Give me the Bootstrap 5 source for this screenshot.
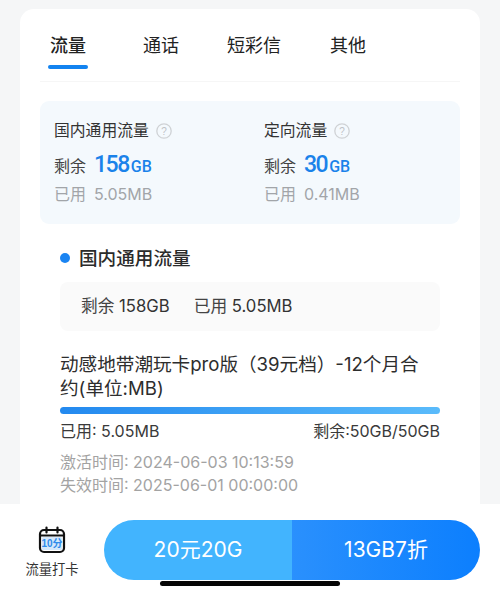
<!DOCTYPE html>
<html lang="zh">
<head>
<meta charset="utf-8">
<title>流量</title>
<link href="https://cdn.jsdelivr.net/npm/bootstrap@5.3.0/dist/css/bootstrap.min.css" rel="stylesheet">
<style>
html,body{height:596px;overflow:hidden}
body{background:#f5f6f7;font-family:"Inter","Noto Sans CJK SC",sans-serif;color:#333;position:relative}
.sheet{height:504px;padding:9px 20px 0}
.panel-main{height:495px;background:#fff;border-radius:14px 14px 0 0;padding:0 20px;overflow:hidden}
.tabs-row{height:73px;border-bottom:1px solid #f6f6f6;padding-top:23px;font-size:18px;line-height:28px;color:#222}
.tab-item{position:absolute;white-space:nowrap}
.tabs-inner{position:relative;height:100%}
.t1{left:10px;font-weight:500}.t2{left:103px}.t3{left:187px}.t4{left:290px}
.tab-bar{position:absolute;left:8px;top:33px;width:40px;height:4px;border-radius:2px;background:#1283f0}
.summary{margin-top:19px;height:123px;background:#f4f9fd;border-radius:9px;padding:19px 14px 0}
.sum-col{flex:0 0 210px}
.sum-title{font-size:15.8px;line-height:22px;color:#333;height:22px}
.qmark{width:16px;height:16px;margin-left:7px}
.sum-left{font-size:16px;line-height:26px;color:#444;margin-top:10px;height:26px}
.big-num{font-size:23px;font-weight:500;color:#1a82ea;margin-left:8px;letter-spacing:-1.5px;font-family:"Roboto","Liberation Sans",sans-serif}
.big-unit{font-size:16px;font-weight:500;color:#1a82ea;margin-left:2px;font-family:"Roboto","Liberation Sans",sans-serif}
.sum-used{font-size:16px;line-height:22px;color:#a2a5a9;margin-top:5px}
.sum-used span{margin-left:8px}
.detail{padding:0 20px}
.det-title{margin-top:21px;height:26px;font-size:18.6px;line-height:26px;font-weight:500;color:#2b2b2b}
.det-dot{width:10px;height:10px;border-radius:50%;background:#1a84f2;margin-right:9px}
.stat-box{margin-top:11px;height:49px;background:#fafafa;border-radius:8px;padding-left:21px;font-size:16.7px;color:#444}
.stat-box b{font-weight:400;color:#333}
.stat-box>div+div{margin-left:24px}
.plan{margin-top:21px;padding-right:10px;font-size:18.6px;line-height:24px;color:#2d2d2d}
.meter{margin-top:7px;height:7px;border-radius:4px;background:linear-gradient(90deg,#2389ef,#5abbfb)}
.usage{margin-top:6px;font-size:16px;line-height:22px;color:#3a3a3a}
.dates{margin-top:9px;font-size:16px;line-height:23px;color:#a3a3a3}
.foot{height:92px;background:#fff;padding:16px 20px 0 0}
.clock-in{width:104px;padding-top:6px;font-size:13.3px;line-height:16px;color:#333}
.clock-in svg{width:28px;height:28px;margin-bottom:7px}
.cta{width:376px;height:60px;border-radius:30px;overflow:hidden;font-size:21px;color:#fff}
.cta-a{width:188px;background:#42b4fe}
.cta-b{width:188px;background:linear-gradient(90deg,#2a90fd,#0c7ffe)}
.home-bar{position:absolute;left:160px;top:581px;width:180px;height:5px;border-radius:3px;background:#050505}
</style>
</head>
<body>
<div class="sheet">
  <div class="panel-main">
    <div class="tabs-row">
      <div class="tabs-inner">
        <div class="tab-item t1">流量</div>
        <div class="tab-item t2">通话</div>
        <div class="tab-item t3">短彩信</div>
        <div class="tab-item t4">其他</div>
        <div class="tab-bar"></div>
      </div>
    </div>
    <div class="summary d-flex">
      <div class="sum-col">
        <div class="sum-title d-flex align-items-center">国内通用流量
          <svg class="qmark" viewBox="0 0 16 16"><circle cx="8" cy="8" r="7.2" fill="none" stroke="#cfd2d5" stroke-width="1.3"/><text x="8" y="11.6" text-anchor="middle" font-size="10" fill="#bfc2c5" font-family="Liberation Sans">?</text></svg>
        </div>
        <div class="sum-left">剩余<span class="big-num">158</span><span class="big-unit">GB</span></div>
        <div class="sum-used">已用<span>5.05MB</span></div>
      </div>
      <div class="sum-col">
        <div class="sum-title d-flex align-items-center">定向流量
          <svg class="qmark" viewBox="0 0 16 16"><circle cx="8" cy="8" r="7.2" fill="none" stroke="#cfd2d5" stroke-width="1.3"/><text x="8" y="11.6" text-anchor="middle" font-size="10" fill="#bfc2c5" font-family="Liberation Sans">?</text></svg>
        </div>
        <div class="sum-left">剩余<span class="big-num">30</span><span class="big-unit">GB</span></div>
        <div class="sum-used">已用<span>0.41MB</span></div>
      </div>
    </div>
    <div class="detail">
      <div class="det-title d-flex align-items-center"><span class="det-dot"></span>国内通用流量</div>
      <div class="stat-box d-flex align-items-center">
        <div>剩余 <b>158GB</b></div>
        <div>已用 <b>5.05MB</b></div>
      </div>
      <div class="plan">动感地带潮玩卡pro版（39元档）-12个月合约(单位:MB)</div>
      <div class="meter"></div>
      <div class="usage d-flex justify-content-between"><span>已用: 5.05MB</span><span>剩余:50GB/50GB</span></div>
      <div class="dates">激活时间: 2024-06-03 10:13:59<br>失效时间: 2025-06-01 00:00:00</div>
    </div>
  </div>
</div>
<div class="foot d-flex">
  <div class="clock-in d-flex flex-column align-items-center">
    <svg viewBox="0 0 28 28">
      <rect x="2" y="4" width="24" height="22" rx="4" fill="#fff" stroke="#111" stroke-width="2.2"/>
      <path d="M2 9.5h24" stroke="#111" stroke-width="2"/>
      <path d="M8.5 1.5v5M19.5 1.5v5" stroke="#111" stroke-width="2.2" stroke-linecap="round"/>
      <rect x="4" y="11" width="20" height="13" rx="1.5" fill="#d5e8fb"/>
      <text x="14" y="21" text-anchor="middle" font-size="10" font-weight="700" fill="#2f8bea" font-family="Liberation Sans,Noto Sans CJK SC">10分</text>
    </svg>
    <div>流量打卡</div>
  </div>
  <div class="cta d-flex">
    <div class="cta-a d-flex align-items-center justify-content-center">20元20G</div>
    <div class="cta-b d-flex align-items-center justify-content-center">13GB7折</div>
  </div>
</div>
<div class="home-bar"></div>
<script src="https://cdn.jsdelivr.net/npm/bootstrap@5.3.0/dist/js/bootstrap.bundle.min.js"></script>
</body>
</html>
